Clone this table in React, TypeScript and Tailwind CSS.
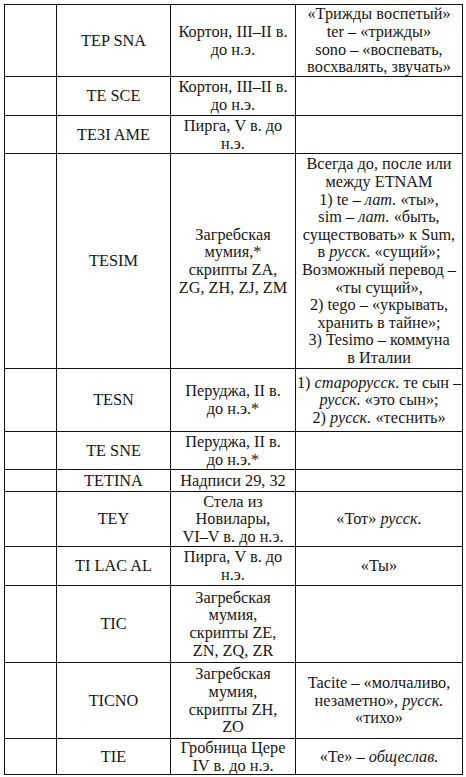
import React from "react";

type Row = {
  h: string;
  a: React.ReactNode;
  b: React.ReactNode;
  c: React.ReactNode;
};

const I = ({ children }: { children: React.ReactNode }) => <i>{children}</i>;

const rows: Row[] = [
  {
    h: "h-[72px]",
    a: "TEP SNA",
    b: (<>Кортон, III–II в.<br />до н.э.</>),
    c: (<>«Трижды воспетый»<br />ter – «трижды»<br />sono – «воспевать,<br />восхвалять, звучать»</>),
  },
  { h: "h-[39px]", a: "TE SCE", b: (<>Кортон, III–II в.<br />до н.э.</>), c: "" },
  { h: "h-[38px]", a: "TEЗI AME", b: (<>Пирга, V в. до<br />н.э.</>), c: "" },
  {
    h: "h-[215px]",
    a: "TESIM",
    b: (<>Загребская<br />мумия,*<br />скрипты ZA,<br />ZG, ZH, ZJ, ZM</>),
    c: (
      <>
        Всегда до, после или<br />между ETNAM<br />1) te – <I>лат.</I> «ты»,<br />sim – <I>лат.</I> «быть,<br />
        существовать» к Sum,<br />в <I>русск.</I> «сущий»;<br />Возможный перевод –<br />«ты сущий»,<br />
        2) tego – «укрывать,<br />хранить в тайне»;<br />3) Tesimo – коммуна<br />в Италии
      </>
    ),
  },
  {
    h: "h-[63px]",
    a: "TESN",
    b: (<>Перуджа, II в.<br />до н.э.*</>),
    c: (<>1) <I>старорусск.</I> те сын –<br /><I>русск.</I> «это сын»;<br />2) <I>русск.</I> «теснить»</>),
  },
  { h: "h-[38px]", a: "TE SNE", b: (<>Перуджа, II в.<br />до н.э.*</>), c: "" },
  { h: "h-[22px]", a: "TETINA", b: "Надписи 29, 32", c: "" },
  {
    h: "h-[55px]",
    a: "TEY",
    b: (<>Стела из<br />Новилары,<br />VI–V в. до н.э.</>),
    c: (<>«Тот» <I>русск.</I></>),
  },
  { h: "h-[39px]", a: "TI LAC AL", b: (<>Пирга, V в. до<br />н.э.</>), c: "«Ты»" },
  { h: "h-[77px]", a: "TIC", b: (<>Загребская<br />мумия,<br />скрипты ZE,<br />ZN, ZQ, ZR</>), c: "" },
  {
    h: "h-[76px]",
    a: "TICNO",
    b: (<>Загребская<br />мумия,<br />скрипты ZH,<br />ZO</>),
    c: (<>Tacite – «молчаливо,<br />незаметно», <I>русск.</I><br />«тихо»</>),
  },
  {
    h: "h-[36px]",
    a: "TIE",
    b: (<>Гробница Цере<br />IV в. до н.э.</>),
    c: (<>«Те» – <I>общеслав.</I></>),
  },
];

export default function App() {
  const td = "border border-[#111] text-center align-middle px-0 py-0 whitespace-nowrap";
  return (
    <div className="w-[466px] h-[777px] bg-white pl-[4px] pt-[4px] overflow-hidden font-['Liberation_Serif','Times_New_Roman',serif]">
      <table className="table-fixed border-collapse w-[458px] text-[16.3px] leading-[17.6px] text-[#161616] font-['Liberation_Serif','Times_New_Roman',serif]">
        <colgroup>
          <col className="w-[52px]" />
          <col className="w-[114px]" />
          <col className="w-[125px]" />
          <col className="w-[167px]" />
        </colgroup>
        <tbody>
          {rows.map((r, i) => (
            <tr key={i} className={r.h}>
              <td className={td}></td>
              <td className={td}>{r.a}</td>
              <td className={td}>{r.b}</td>
              <td className={td}>{r.c}</td>
            </tr>
          ))}
        </tbody>
      </table>
    </div>
  );
}
